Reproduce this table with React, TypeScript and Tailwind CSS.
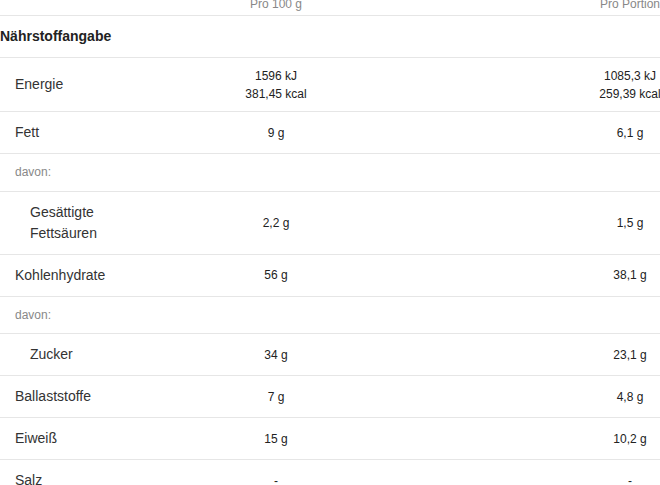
import React from 'react';

type Row = {
  label: React.ReactNode;
  per100?: string[];
  perPortion?: string[];
  kind?: 'title' | 'note' | 'sub' | 'main';
};

const rows: Row[] = [
  { label: 'Nährstoffangabe', kind: 'title' },
  { label: 'Energie', per100: ['1596 kJ', '381,45 kcal'], perPortion: ['1085,3 kJ', '259,39 kcal'] },
  { label: 'Fett', per100: ['9 g'], perPortion: ['6,1 g'] },
  { label: 'davon:', kind: 'note' },
  { label: <>Gesättigte<br />Fettsäuren</>, per100: ['2,2 g'], perPortion: ['1,5 g'], kind: 'sub' },
  { label: 'Kohlenhydrate', per100: ['56 g'], perPortion: ['38,1 g'] },
  { label: 'davon:', kind: 'note' },
  { label: 'Zucker', per100: ['34 g'], perPortion: ['23,1 g'], kind: 'sub' },
  { label: 'Ballaststoffe', per100: ['7 g'], perPortion: ['4,8 g'] },
  { label: 'Eiweiß', per100: ['15 g'], perPortion: ['10,2 g'] },
  { label: 'Salz', per100: ['-'], perPortion: ['-'] },
];

const Values: React.FC<{ lines?: string[] }> = ({ lines }) => (
  <div className="flex flex-col items-center justify-center py-[8.5px] text-[12px] leading-[18px] text-[#222] whitespace-nowrap">
    {lines?.map((l) => (
      <span key={l}>{l}</span>
    ))}
  </div>
);

const NutritionRow: React.FC<{ row: Row }> = ({ row }) => {
  const kind = row.kind ?? 'main';
  let labelCls = 'py-[10px] pl-[15px] text-[14px] leading-[21px] text-[#333]';
  if (kind === 'title') labelCls = 'py-[10px] pl-0 text-[14px] leading-[21px] font-bold text-[#222]';
  if (kind === 'note') labelCls = 'py-[10px] pl-[15px] text-[12px] leading-[16.5px] text-[#888]';
  if (kind === 'sub') labelCls = 'py-[10px] pl-[30px] text-[14px] leading-[21px] text-[#333]';

  return (
    <div className="grid grid-cols-[216px_120px_224px_140px] items-center border-b border-[#e6e6e6]">
      <div className={labelCls}>{row.label}</div>
      <Values lines={row.per100} />
      <div />
      <Values lines={row.perPortion} />
    </div>
  );
};

export default function App() {
  return (
    <div className="w-[660px] h-[485px] overflow-hidden bg-white" style={{ fontFamily: '"Liberation Sans", Arial, sans-serif' }}>
      <div className="w-[700px] -mt-[4px]">
        <div className="grid grid-cols-[216px_120px_224px_140px] border-b border-[#e6e6e6] pb-[2px] text-[12px] leading-[17px] text-[#888]">
          <div />
          <div className="text-center">Pro 100 g</div>
          <div />
          <div className="text-center">Pro Portion</div>
        </div>
        {rows.map((r, i) => (
          <NutritionRow key={i} row={r} />
        ))}
      </div>
    </div>
  );
}
